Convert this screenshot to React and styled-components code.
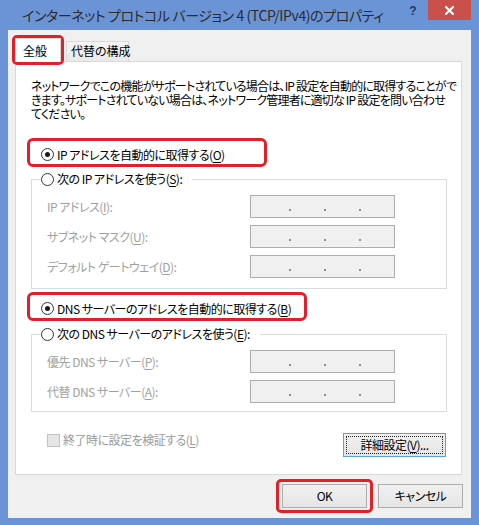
import React from 'react';
import styled, { createGlobalStyle } from 'styled-components';

const GlobalStyle = createGlobalStyle`
  html, body {
    margin: 0;
    padding: 0;
    background: #6b94d6;
  }
  body {
    font-family: "Noto Sans CJK JP", "Noto Sans", sans-serif;
    font-feature-settings: "palt";
    -webkit-font-smoothing: antialiased;
  }
`;

const Window = styled.div`
  width: 479px;
  height: 525px;
  box-sizing: border-box;
  padding: 0 8px 7px;
  background: #6b94d6;
  display: flex;
  flex-direction: column;
`;

const TitleBar = styled.div`
  height: 30px;
  display: flex;
  align-items: flex-start;
`;

const Title = styled.div`
  flex: 1;
  min-width: 0;
  padding: 5px 0 0 14px;
  font-size: 14px;
  letter-spacing: -0.4px;
  line-height: 20px;
  color: #2b2b2b;
  white-space: nowrap;
`;

const HelpButton = styled.div`
  width: 26px;
  height: 20px;
  margin-right: 2px;
  display: flex;
  align-items: center;
  justify-content: center;
  font-family: "Liberation Sans", sans-serif;
  font-weight: bold;
  font-size: 12px;
  color: #1d3a6e;
  padding-top: 1px;
  box-sizing: border-box;
`;

const CloseButton = styled.div`
  width: 43px;
  height: 20px;
  background: #c9504b;
  display: flex;
  align-items: center;
  justify-content: center;
`;

const Client = styled.div`
  flex: 1;
  background: #f0f0f0;
  display: flex;
  flex-direction: column;
  font-size: 12px;
  letter-spacing: -0.5px;
  color: #000;
`;

const TabRow = styled.div`
  position: relative;
  z-index: 1;
  height: 32px;
  margin-bottom: -1px;
  padding-left: 7px;
  display: flex;
  align-items: flex-end;
`;

const Marker = styled.div`
  display: flex;
  border: 3px solid #e2202a;
  border-radius: 5px;
  margin: ${p => p.$margin || '-3px'};
  padding: ${p => p.$pad || '0'};
`;

const Tab = styled.div`
  box-sizing: border-box;
  height: ${p => (p.$active ? '24px' : '20px')};
  margin-left: ${p => (p.$active ? '0' : '5px')};
  margin-bottom: ${p => (p.$active ? '0' : '1px')};
  padding: ${p => (p.$active ? '4px 8px 0 7px' : '1px 4px 0 4px')};
  width: ${p => (p.$active ? '46px' : '63px')};
  border: 1px solid #d9d9d9;
  border-bottom: none;
  background: ${p => (p.$active ? '#fff' : 'linear-gradient(#f5f5f5, #e9e9e9)')};
  line-height: 16px;
  letter-spacing: 0;
  white-space: nowrap;
`;

const Panel = styled.div`
  margin: 0 9px 0 7px;
  height: 414px;
  box-sizing: border-box;
  background: #fff;
  border: 1px solid #d9d9d9;
  padding: 17px 14px 0 15px;
  display: flex;
  flex-direction: column;
`;

const Description = styled.p`
  margin: 0;
  line-height: 14px;
  letter-spacing: -0.8px;
  white-space: nowrap;
`;

const OptionRow = styled.div`
  box-sizing: border-box;
  width: ${p => p.$width}px;
  height: 29px;
  margin: ${p => p.$gap}px 0 0 -4px;
  padding: 3px 0 0 11px;
  border: 3px solid ${p => (p.$marked ? '#e2202a' : 'transparent')};
  border-radius: 6px;
  display: flex;
  align-items: center;
  gap: 3px;
  white-space: nowrap;
`;

const Radio = styled.span`
  width: 13px;
  height: 13px;
  box-sizing: border-box;
  border-radius: 50%;
  border: 1px solid #333;
  background: #fff;
  display: inline-flex;
  align-items: center;
  justify-content: center;
  flex-shrink: 0;

  &::after {
    content: '';
    width: 5px;
    height: 5px;
    border-radius: 50%;
    background: ${p => (p.$checked ? '#1a1a1a' : 'transparent')};
  }
`;

const Group = styled.fieldset`
  margin: ${p => p.$gap}px 0 0;
  padding: 8px 0 ${p => p.$bottom}px 9px;
  border: 1px solid #dcdcdc;
  min-width: 0;
`;

const Legend = styled.legend`
  padding: 0 10px 0 0;
  height: 16px;
  display: flex;
  align-items: center;
  gap: 3px;
  line-height: 16px;
  white-space: nowrap;
`;

const FieldGrid = styled.div`
  display: grid;
  grid-template-columns: 209px 145px;
  grid-auto-rows: 23px;
  row-gap: 7px;
`;

const FieldLabel = styled.div`
  padding-left: 6px;
  display: flex;
  align-items: center;
  color: #a0a0a0;
  white-space: nowrap;
`;

const AddressBox = styled.div`
  box-sizing: border-box;
  border: 1px solid #adadad;
  background: #f0f0f0;
  display: flex;
  padding: 13px 0 0 38px;
  gap: 33px;
`;

const Dot = styled.span`
  width: 2px;
  height: 2px;
  background: #8f8f8f;
`;

const BottomRow = styled.div`
  margin-top: 21px;
  display: flex;
  justify-content: space-between;
  align-items: flex-start;
`;

const CheckLabel = styled.div`
  padding-left: 16px;
  display: flex;
  align-items: center;
  gap: 3px;
  line-height: 14px;
  color: #9a9a9a;
  white-space: nowrap;
`;

const CheckBox = styled.span`
  width: 13px;
  height: 13px;
  box-sizing: border-box;
  border: 1px solid #c2c2c2;
  background: #e6e6e6;
`;

const Button = styled.div`
  box-sizing: border-box;
  width: ${p => p.$width}px;
  height: 24px;
  margin-right: ${p => p.$right || 0}px;
  border: 1px solid ${p => (p.$focused ? '#5b9ee6' : '#acacac')};
  background: linear-gradient(#f0f0f0, #e5e5e5);
  display: flex;
  align-items: center;
  justify-content: center;
  white-space: nowrap;
  line-height: 16px;
  outline: ${p => (p.$focused ? '1px dotted #222' : 'none')};
  outline-offset: -4px;
`;

const ButtonRow = styled.div`
  display: flex;
  justify-content: flex-end;
  gap: 11px;
  padding: 9px 8px 0 0;
`;

const Key = styled.u`
  text-underline-offset: 2px;
`;

const ipFields = [
  ['IP アドレス(', 'I', '):'],
  ['サブネット マスク(', 'U', '):'],
  ['デフォルト ゲートウェイ(', 'D', '):'],
];

const dnsFields = [
  ['優先 DNS サーバー(', 'P', '):'],
  ['代替 DNS サーバー(', 'A', '):'],
];

const Address = () => (
  <AddressBox>
    <Dot />
    <Dot />
    <Dot />
  </AddressBox>
);

const Fields = ({ items }) => (
  <FieldGrid>
    {items.map(([pre, key, post]) => (
      <React.Fragment key={key}>
        <FieldLabel>
          {pre}
          <Key>{key}</Key>
          {post}
        </FieldLabel>
        <Address />
      </React.Fragment>
    ))}
  </FieldGrid>
);

export default function App() {
  return (
    <>
      <GlobalStyle />
      <Window>
        <TitleBar>
          <Title>インターネット プロトコル バージョン 4 (TCP/IPv4)のプロパティ</Title>
          <HelpButton>?</HelpButton>
          <CloseButton>
            <svg width="9" height="9" viewBox="0 0 9 9">
              <path d="M1 1 L8 8 M8 1 L1 8" stroke="#fff" strokeWidth="2" strokeLinecap="square" />
            </svg>
          </CloseButton>
        </TitleBar>
        <Client>
          <TabRow>
            <Marker>
              <Tab $active>全般</Tab>
            </Marker>
            <Tab>代替の構成</Tab>
          </TabRow>
          <Panel>
            <Description>
              ネットワークでこの機能がサポートされている場合は、IP 設定を自動的に取得することがで
              <br />
              きます。サポートされていない場合は、ネットワーク管理者に適切な IP 設定を問い合わせ
              <br />
              てください。
            </Description>

            <OptionRow $marked $width={240} $gap={17}>
              <Radio $checked />
              <span>
                IP アドレスを自動的に取得する(<Key>O</Key>)
              </span>
            </OptionRow>
            <Group $gap={4} $bottom={10}>
              <Legend>
                <Radio />
                <span>
                  次の IP アドレスを使う(<Key>S</Key>):
                </span>
              </Legend>
              <Fields items={ipFields} />
            </Group>

            <OptionRow $marked $width={280} $gap={3}>
              <Radio $checked />
              <span>
                DNS サーバーのアドレスを自動的に取得する(<Key>B</Key>)
              </span>
            </OptionRow>
            <Group $gap={5} $bottom={8}>
              <Legend>
                <Radio />
                <span>
                  次の DNS サーバーのアドレスを使う(<Key>E</Key>):
                </span>
              </Legend>
              <Fields items={dnsFields} />
            </Group>

            <BottomRow>
              <CheckLabel>
                <CheckBox />
                <span>
                  終了時に設定を検証する(<Key>L</Key>)
                </span>
              </CheckLabel>
              <Button $focused $width={103} $right={1}>
                詳細設定(<Key>V</Key>)...
              </Button>
            </BottomRow>
          </Panel>
          <ButtonRow>
            <Marker $margin="-5px -6px" $pad="2px 3px">
              <Button $width={85}>OK</Button>
            </Marker>
            <Button $width={85}>キャンセル</Button>
          </ButtonRow>
        </Client>
      </Window>
    </>
  );
}
